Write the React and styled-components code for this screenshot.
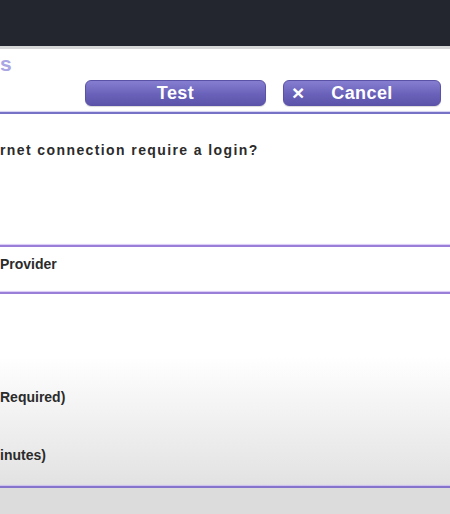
import React from 'react';
import styled, { createGlobalStyle } from 'styled-components';

const Global = createGlobalStyle`
  html, body {
    margin: 0;
    padding: 0;
    background: #ffffff;
    overflow: hidden;
  }
  body {
    font-family: "Liberation Sans", Arial, sans-serif;
  }
`;

const Page = styled.div`
  width: 450px;
  height: 514px;
  display: flex;
  flex-direction: column;
  overflow: hidden;
  background: #dcdcdc;
`;

const TopBar = styled.div`
  height: 46px;
  background: #23262e;
  flex: none;
`;

const Divider = styled.div`
  height: 3px;
  background: #d6d6d8;
  flex: none;
`;

const Header = styled.div`
  background: #ffffff;
  padding: 2px 9px 0 0;
  display: flex;
  flex-direction: column;
`;

const Title = styled.div`
  font-size: 21px;
  line-height: 26px;
  font-weight: bold;
  color: #aaa6e4;
`;

const ButtonRow = styled.div`
  display: flex;
  justify-content: flex-end;
  gap: 17px;
  margin-top: 3px;
`;

const Button = styled.button`
  position: relative;
  width: ${p => p.$w}px;
  height: 26px;
  border: 1px solid #5a52a6;
  border-radius: 6px;
  background: linear-gradient(#857ed0, #6a62ba 55%, #5c54aa);
  color: #ffffff;
  font-family: "Liberation Sans", Arial, sans-serif;
  font-size: 18px;
  font-weight: bold;
  letter-spacing: 0.4px;
  padding: 0;
  display: flex;
  align-items: center;
  justify-content: center;
  box-shadow: 0 1px 1px rgba(0, 0, 0, 0.15);
`;

const ButtonIcon = styled.span`
  position: absolute;
  left: 8px;
  top: 50%;
  transform: translateY(-52%);
  font-size: 21px;
  font-weight: bold;
  line-height: 1;
`;

const Rule = styled.div`
  height: 2px;
  background: ${p => p.$color};
  box-shadow: 0 0 1px 1px ${p => p.$halo};
  flex: none;
`;

const Section = styled.div`
  background: ${p => p.$bg || '#ffffff'};
  padding: ${p => p.$pad};
  display: flex;
  flex-direction: column;
  flex: none;
`;

const Label = styled.div`
  font-size: 14px;
  line-height: 18px;
  font-weight: bold;
  color: #2b2b2b;
  letter-spacing: ${p => p.$spacing || 0}px;
  margin-top: ${p => p.$mt || 0}px;
  white-space: nowrap;
`;

const Bottom = styled.div`
  flex: 1;
  background: #dcdcdc;
`;

export default function App() {
  return (
    <Page>
      <Global />
      <TopBar />
      <Divider />
      <Header>
        <Title>s</Title>
        <ButtonRow>
          <Button $w={181}>Test</Button>
          <Button $w={158}>
            <ButtonIcon>×</ButtonIcon>
            Cancel
          </Button>
        </ButtonRow>
      </Header>
      <Section $pad="6px 0 0 0" />
      <Rule $color="#7772c6" $halo="#d2cff2" />
      <Section $pad="27px 0 86px 0">
        <Label $spacing={1.4}>rnet connection require a login?</Label>
      </Section>
      <Rule $color="#9a7fd8" $halo="#d8c8f4" />
      <Section $pad="8px 0 19px 0">
        <Label>Provider</Label>
      </Section>
      <Rule $color="#9a7fd8" $halo="#d8c8f4" />
      <Section
        $pad="94px 0 22px 0"
        $bg="linear-gradient(#ffffff 0px, #ffffff 62px, #f2f2f2 120px, #e2e2e2 192px)"
      >
        <Label>Required)</Label>
        <Label $mt={40}>inutes)</Label>
      </Section>
      <Rule $color="#8574cc" $halo="#cdbff0" />
      <Bottom />
    </Page>
  );
}
